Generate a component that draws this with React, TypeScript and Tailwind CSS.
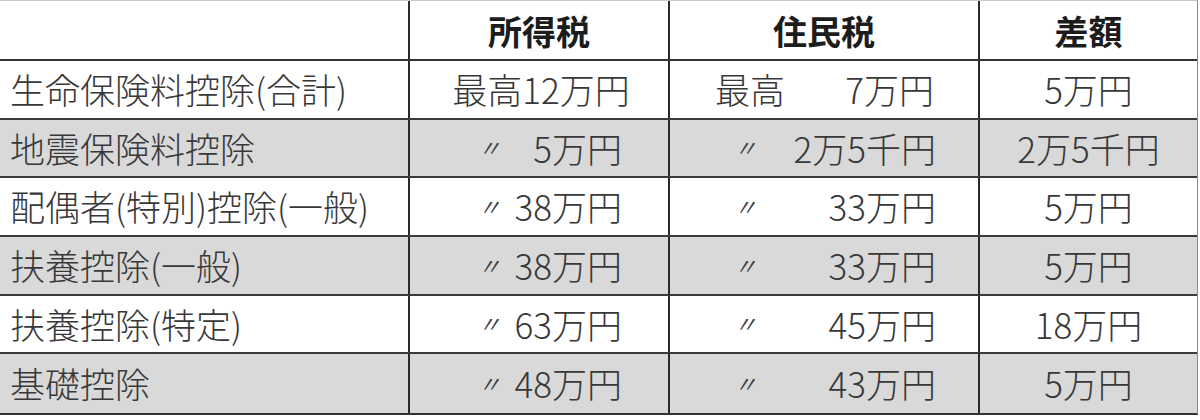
import React from 'react';

type Row = {
  label: string;
  income: string;
  resident: string;
  diff: string;
  first?: boolean;
};

const rows: Row[] = [
  { label: '生命保険料控除(合計)', income: '最高12万円', resident: '7万円', diff: '5万円', first: true },
  { label: '地震保険料控除', income: '5万円', resident: '2万5千円', diff: '2万5千円' },
  { label: '配偶者(特別)控除(一般)', income: '38万円', resident: '33万円', diff: '5万円' },
  { label: '扶養控除(一般)', income: '38万円', resident: '33万円', diff: '5万円' },
  { label: '扶養控除(特定)', income: '63万円', resident: '45万円', diff: '18万円' },
  { label: '基礎控除', income: '48万円', resident: '43万円', diff: '5万円' },
];

const Ditto = () => (
  <span className="text-[23px] leading-none font-normal text-[#404040] italic">〃</span>
);

export default function App() {
  return (
    <div
      className="w-[1200px] h-[420px] bg-white text-[#383838]"
      style={{ fontFamily: '"Noto Sans CJK JP", "Noto Sans", sans-serif' }}
    >
      <div className="w-[1198px] border-t border-r border-[#c8c8c8] border-r-[#8a8a8a] border-b-2 border-b-[#333]">
        {/* header */}
        <div className="grid grid-cols-[410px_260px_310px_1fr] h-[60px] border-b-2 border-[#333] bg-white">
          <div className="border-r-2 border-[#2a2a2a]" />
          <div className="border-r-2 border-[#2a2a2a] flex items-center justify-center text-[34px] font-bold text-[#1c1c1c]">
            所得税
          </div>
          <div className="border-r-2 border-[#2a2a2a] flex items-center justify-center text-[34px] font-bold text-[#1c1c1c]">
            住民税
          </div>
          <div className="flex items-center justify-center text-[34px] font-bold text-[#1c1c1c]">
            差額
          </div>
        </div>

        {rows.map((row, i) => (
          <div
            key={row.label}
            className={`grid grid-cols-[410px_260px_310px_1fr] h-[58.67px] text-[35px] font-light ${
              i < rows.length - 1 ? 'border-b-2 border-[#3a3a3a]' : ''
            } ${i % 2 === 1 ? 'bg-[#d9d9d9]' : 'bg-white'}`}
          >
            <div className="border-r-2 border-[#2a2a2a] flex items-center pl-[10px] whitespace-nowrap">
              {row.label}
            </div>
            {row.first ? (
              <div className="border-r-2 border-[#2a2a2a] flex items-center justify-center pl-[4px]">
                {row.income}
              </div>
            ) : (
              <div className="border-r-2 border-[#2a2a2a] flex items-center pl-[68px] pr-[46px]">
                <Ditto />
                <span className="ml-auto">{row.income}</span>
              </div>
            )}
            {row.first ? (
              <div className="border-r-2 border-[#2a2a2a] flex items-center pl-[45px] pr-[44px]">
                <span>最高</span>
                <span className="ml-auto">{row.resident}</span>
              </div>
            ) : (
              <div className="border-r-2 border-[#2a2a2a] flex items-center pl-[64px] pr-[42px]">
                <Ditto />
                <span className="ml-auto">{row.resident}</span>
              </div>
            )}
            <div className="flex items-center justify-center">{row.diff}</div>
          </div>
        ))}
      </div>
    </div>
  );
}
